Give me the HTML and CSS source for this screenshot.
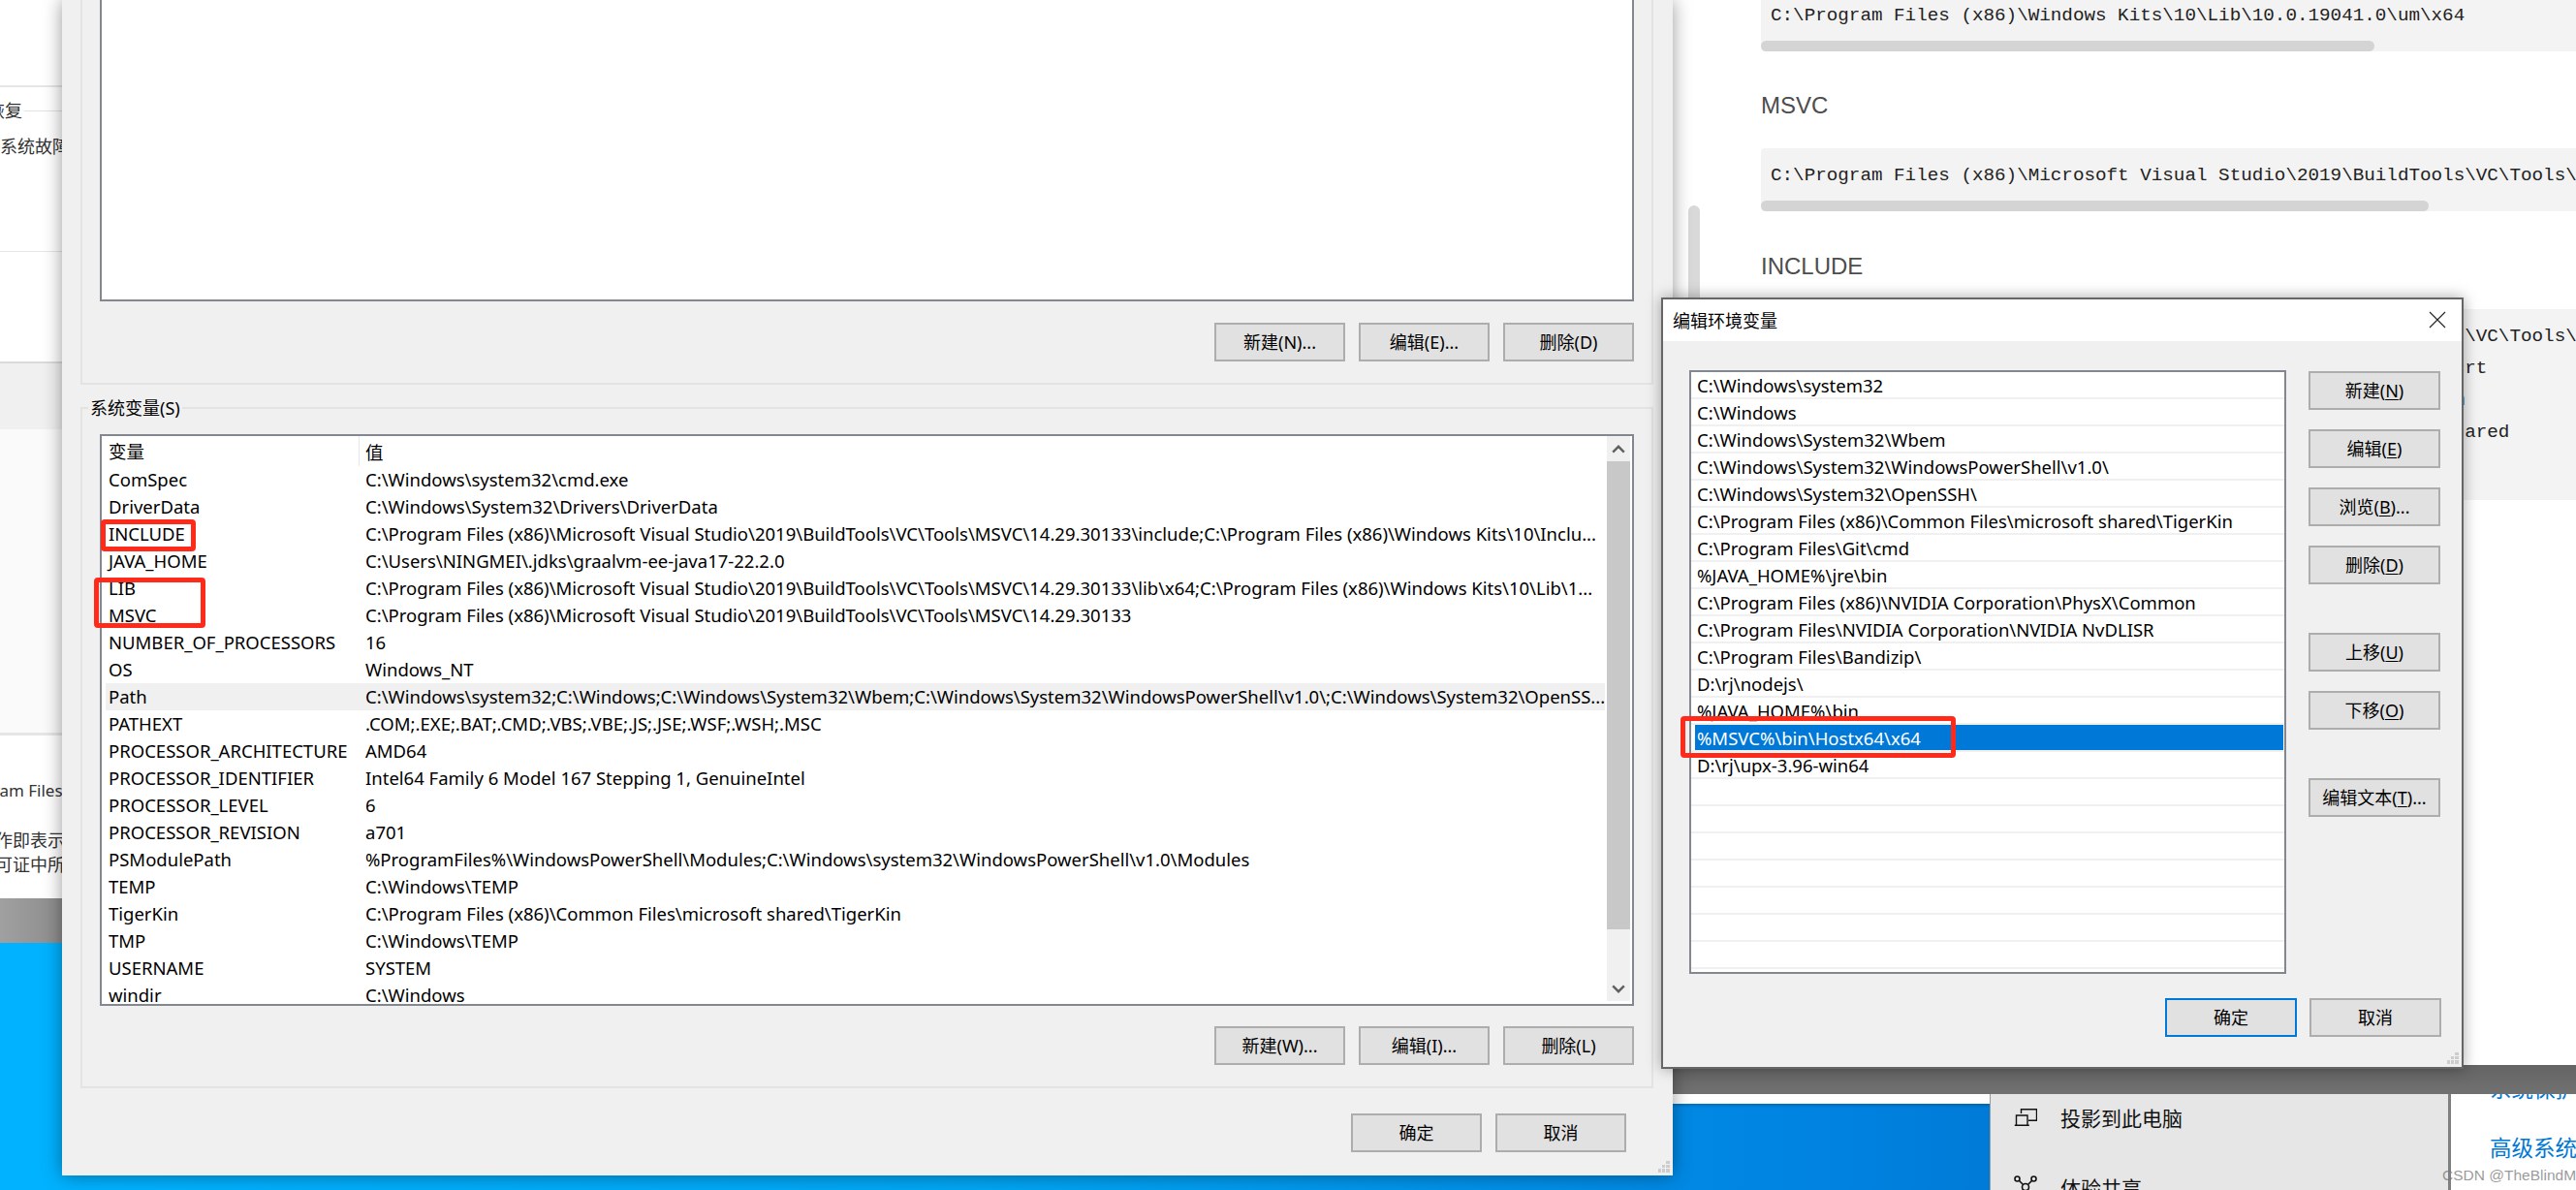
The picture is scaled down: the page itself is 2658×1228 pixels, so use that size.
FILE: index.html
```html
<!DOCTYPE html>
<html lang="zh-CN">
<head>
<meta charset="utf-8">
<title>编辑环境变量</title>
<link rel="stylesheet" href="styles.css">
</head>
<body>
<div class="screen">

  <section class="bg-left">
    <div class="bl-white">
      <div class="bl-sec bl-sec-a"></div>
      <div class="bl-legend"><span class="bl-txt bl-shift">和恢复</span><i class="bl-rule"></i></div>
      <div class="bl-txt bl-fault">系统故障</div>
    </div>
    <div class="bl-band"></div>
    <div class="bl-lower"></div>
    <div class="bl-legal">
      <div class="bl-txt bl-prog">Program Files</div>
      <div class="bl-txt bl-l1">作即表示你</div>
      <div class="bl-txt bl-l2">可证中所述</div>
    </div>
    <div class="bl-gray"></div>
  </section>

  <section class="right">
    <div class="article">
      <div class="gutter"><div class="gutter-thumb"></div></div>
      <div class="content">
        <div class="code code-first">
          <div class="code-text">C:\Program Files (x86)\Windows Kits\10\Lib\10.0.19041.0\um\x64</div>
          <div class="code-bar bar-a"></div>
        </div>
        <p class="para para-msvc">MSVC</p>
        <div class="code">
          <div class="code-text">C:\Program Files (x86)\Microsoft Visual Studio\2019\BuildTools\VC\Tools\MSVC\14.29.30133</div>
          <div class="code-bar bar-b"></div>
        </div>
        <p class="para para-inc">INCLUDE</p>
        <div class="code code-multi">
          <div class="code-text">C:\Program Files (x86)\Microsoft Visual Studio\2019\BuildTools\VC\Tools\MSVC\14.29.30133\include</div>
          <div class="code-text">C:\Program Files (x86)\Windows Kits\10\Include\10.0.19041.0\ucrt</div>
          <div class="code-text">C:\Program Files (x86)\Windows Kits\10\Include\10.0.19041.0\um</div>
          <div class="code-text">C:\Program Files (x86)\Windows Kits\10\Include\10.0.19041.0\shared</div>
        </div>
      </div>
    </div>
    <div class="band"></div>
    <div class="settings">
      <div class="desk"><div class="desk-strip"></div></div>
      <div class="panel">
        <div class="panel-list">
          <div class="panel-row">
            <svg class="panel-ico" viewBox="0 0 24 18" width="24" height="18"><path d="M7.5 5V.8h16v11.4H15M.8 17.2h15M2.5 17V7h11.5v10" fill="none" stroke="#111" stroke-width="1.4"/></svg>
            <span>投影到此电脑</span>
          </div>
          <div class="panel-row">
            <svg class="panel-ico" viewBox="0 0 24 24" width="24" height="24"><g fill="none" stroke="#111" stroke-width="1.6"><circle cx="3.5" cy="3.5" r="2.5"/><circle cx="20.5" cy="3.5" r="2.5"/><circle cx="12" cy="12" r="3.5"/><circle cx="3.5" cy="21" r="2.5"/><circle cx="20.5" cy="21" r="2.5"/><path d="M5.3 5.3l4 4M18.7 5.3l-4 4M5.3 19.3l4-4.5M18.7 19.3l-4-4.5"/></g></svg>
            <span>体验共享</span>
          </div>
        </div>
      </div>
      <div class="links">
        <a class="link link-clip">系统保护</a>
        <a class="link">高级系统设置</a>
      </div>
    </div>
  </section>

  <section class="dialog main-dlg">
    <div class="group-top">
      <div class="listbox-empty"></div>
      <div class="btn-row">
        <button class="btn">新建(N)...</button>
        <button class="btn">编辑(E)...</button>
        <button class="btn">删除(D)</button>
      </div>
    </div>
    <fieldset class="group-sys">
      <legend class="legend">系统变量(S)</legend>
      <div class="lv">
        <div class="lv-body">
          <div class="lv-head"><span class="col-n">变量</span><span class="col-v">值</span></div>
          <div class="lv-row"><span class="col-n">ComSpec</span><span class="col-v">C:\Windows\system32\cmd.exe</span></div>
          <div class="lv-row"><span class="col-n">DriverData</span><span class="col-v">C:\Windows\System32\Drivers\DriverData</span></div>
          <div class="lv-row"><span class="col-n">INCLUDE</span><span class="col-v">C:\Program Files (x86)\Microsoft Visual Studio\2019\BuildTools\VC\Tools\MSVC\14.29.30133\include;C:\Program Files (x86)\Windows Kits\10\Inclu...</span></div>
          <div class="lv-row"><span class="col-n">JAVA_HOME</span><span class="col-v">C:\Users\NINGMEI\.jdks\graalvm-ee-java17-22.2.0</span></div>
          <div class="lv-row"><span class="col-n">LIB</span><span class="col-v">C:\Program Files (x86)\Microsoft Visual Studio\2019\BuildTools\VC\Tools\MSVC\14.29.30133\lib\x64;C:\Program Files (x86)\Windows Kits\10\Lib\1...</span></div>
          <div class="lv-row"><span class="col-n">MSVC</span><span class="col-v">C:\Program Files (x86)\Microsoft Visual Studio\2019\BuildTools\VC\Tools\MSVC\14.29.30133</span></div>
          <div class="lv-row"><span class="col-n">NUMBER_OF_PROCESSORS</span><span class="col-v">16</span></div>
          <div class="lv-row"><span class="col-n">OS</span><span class="col-v">Windows_NT</span></div>
          <div class="lv-row lv-hot"><span class="col-n">Path</span><span class="col-v">C:\Windows\system32;C:\Windows;C:\Windows\System32\Wbem;C:\Windows\System32\WindowsPowerShell\v1.0\;C:\Windows\System32\OpenSS...</span></div>
          <div class="lv-row"><span class="col-n">PATHEXT</span><span class="col-v">.COM;.EXE;.BAT;.CMD;.VBS;.VBE;.JS;.JSE;.WSF;.WSH;.MSC</span></div>
          <div class="lv-row"><span class="col-n">PROCESSOR_ARCHITECTURE</span><span class="col-v">AMD64</span></div>
          <div class="lv-row"><span class="col-n">PROCESSOR_IDENTIFIER</span><span class="col-v">Intel64 Family 6 Model 167 Stepping 1, GenuineIntel</span></div>
          <div class="lv-row"><span class="col-n">PROCESSOR_LEVEL</span><span class="col-v">6</span></div>
          <div class="lv-row"><span class="col-n">PROCESSOR_REVISION</span><span class="col-v">a701</span></div>
          <div class="lv-row"><span class="col-n">PSModulePath</span><span class="col-v">%ProgramFiles%\WindowsPowerShell\Modules;C:\Windows\system32\WindowsPowerShell\v1.0\Modules</span></div>
          <div class="lv-row"><span class="col-n">TEMP</span><span class="col-v">C:\Windows\TEMP</span></div>
          <div class="lv-row"><span class="col-n">TigerKin</span><span class="col-v">C:\Program Files (x86)\Common Files\microsoft shared\TigerKin</span></div>
          <div class="lv-row"><span class="col-n">TMP</span><span class="col-v">C:\Windows\TEMP</span></div>
          <div class="lv-row"><span class="col-n">USERNAME</span><span class="col-v">SYSTEM</span></div>
          <div class="lv-row"><span class="col-n">windir</span><span class="col-v">C:\Windows</span></div>
        </div>
        <div class="sb">
          <div class="sb-btn sb-up"><svg viewBox="0 0 14 9" width="14" height="9"><path d="M1.2 7.6L7 1.8l5.8 5.8" fill="none" stroke="#606060" stroke-width="2.4"/></svg></div>
          <div class="sb-thumb"></div>
          <div class="sb-track"></div>
          <div class="sb-btn sb-down"><svg viewBox="0 0 14 9" width="14" height="9"><path d="M1.2 1.4L7 7.2l5.8-5.8" fill="none" stroke="#606060" stroke-width="2.4"/></svg></div>
        </div>
      </div>
      <div class="btn-row btn-row-sys">
        <button class="btn">新建(W)...</button>
        <button class="btn">编辑(I)...</button>
        <button class="btn">删除(L)</button>
      </div>
    </fieldset>
    <div class="dlg-foot">
      <button class="btn">确定</button>
      <button class="btn">取消</button>
    </div>
    <svg class="grip" viewBox="0 0 12 12" width="12" height="12"><path d="M8 0h4v3H8zM4 4h3v3H4zM8 4h4v3H8zM0 8h3v4H0zM4 8h3v4H4zM8 8h4v4H8z" fill="#cdcdcd"/></svg>
  </section>

  <section class="dialog edit-dlg">
    <header class="edit-title">
      <span>编辑环境变量</span>
      <svg class="close-x" viewBox="0 0 18 18" width="18" height="18"><path d="M1 1l16 16M17 1L1 17" fill="none" stroke="#222" stroke-width="1.1"/></svg>
    </header>
    <div class="edit-body">
      <div class="pathlist">
        <div class="p-row">C:\Windows\system32</div>
        <div class="p-row">C:\Windows</div>
        <div class="p-row">C:\Windows\System32\Wbem</div>
        <div class="p-row">C:\Windows\System32\WindowsPowerShell\v1.0\</div>
        <div class="p-row">C:\Windows\System32\OpenSSH\</div>
        <div class="p-row">C:\Program Files (x86)\Common Files\microsoft shared\TigerKin</div>
        <div class="p-row">C:\Program Files\Git\cmd</div>
        <div class="p-row">%JAVA_HOME%\jre\bin</div>
        <div class="p-row">C:\Program Files (x86)\NVIDIA Corporation\PhysX\Common</div>
        <div class="p-row">C:\Program Files\NVIDIA Corporation\NVIDIA NvDLISR</div>
        <div class="p-row">C:\Program Files\Bandizip\</div>
        <div class="p-row">D:\rj\nodejs\</div>
        <div class="p-row">%JAVA_HOME%\bin</div>
        <div class="p-row p-sel-wrap"><span class="p-sel">%MSVC%\bin\Hostx64\x64</span></div>
        <div class="p-row">D:\rj\upx-3.96-win64</div>
        <div class="p-row"></div>
        <div class="p-row"></div>
        <div class="p-row"></div>
        <div class="p-row"></div>
        <div class="p-row"></div>
        <div class="p-row"></div>
        <div class="p-row"></div>
      </div>
      <div class="edit-btns">
        <button class="btn btn-w">新建(<u>N</u>)</button>
        <button class="btn btn-w">编辑(<u>E</u>)</button>
        <button class="btn btn-w">浏览(<u>B</u>)...</button>
        <button class="btn btn-w">删除(<u>D</u>)</button>
        <button class="btn btn-w btn-gap">上移(<u>U</u>)</button>
        <button class="btn btn-w">下移(<u>O</u>)</button>
        <button class="btn btn-w btn-gap">编辑文本(<u>T</u>)...</button>
      </div>
    </div>
    <div class="edit-foot">
      <button class="btn btn-w btn-focus">确定</button>
      <button class="btn btn-w">取消</button>
    </div>
    <svg class="grip" viewBox="0 0 12 12" width="12" height="12"><path d="M8 0h4v3H8zM4 4h3v3H4zM8 4h4v3H8zM0 8h3v4H0zM4 8h3v4H4zM8 8h4v4H8z" fill="#cdcdcd"/></svg>
  </section>

  <div class="mark mark-include"></div>
  <div class="mark mark-lib"></div>
  <div class="mark mark-path"></div>
  <div class="watermark">CSDN @TheBlindM</div>
</div>
</body>
</html>
```

FILE: styles.css
```css
* { box-sizing: border-box; }
html, body { margin: 0; padding: 0; }
body {
  width: 2658px;
  height: 1228px;
  overflow: hidden;
  font-family: "Noto Sans", "Noto Sans CJK SC", sans-serif;
  font-size: 18.5px;
  color: #000;
}
.screen {
  position: relative;
  width: 2658px;
  height: 1228px;
  overflow: hidden;
  background: linear-gradient(90deg, #00b2ff 0, #00a6f4 1000px, #0082e0 1900px, #0078d4 2100px);
}

/* window far left */
.bg-left {
  position: absolute;
  left: 0;
  top: 0;
  width: 64px;
  height: 973px;
  display: flex;
  flex-direction: column;
  overflow: hidden;
  background: #fff;
}
.bl-white { height: 375px; background: #fff; border-bottom: 2px solid #dcdcdc; }
.bl-sec-a { height: 90px; border-bottom: 2px solid #e6e6e6; }
.bl-legend { height: 48px; display: flex; align-items: center; }
.bl-rule { flex: 1; height: 1px; background: #e2e2e2; }
.bl-txt { white-space: nowrap; font-size: 18px; color: #333; line-height: 26px; }
.bl-shift { margin-left: -31px; margin-right: 2px; flex: none; }
.bl-fault { padding-bottom: 95px; border-bottom: 1px solid #e6e6e6; }
.bl-band { height: 68px; background: #f0f0f0; box-shadow: 0 2px 3px rgba(0,0,0,.25); }
.bl-lower { height: 316px; background: #fafafa; border-bottom: 3px solid #e6e6e6; }
.bl-legal { height: 168px; background: #fff; padding-top: 44px; }
.bl-prog { margin-left: -45px; font-size: 17px; }
.bl-l1 { margin-left: -5px; margin-top: 25px; }
.bl-l2 { margin-left: -5px; margin-top: -1px; }
.bl-gray { height: 46px; background: linear-gradient(90deg, #a0a0a0, #8c8c8c); }

/* browser + settings behind */
.right {
  position: absolute;
  left: 1726px;
  top: 0;
  width: 932px;
  height: 1228px;
  display: flex;
  flex-direction: column;
}
.article { height: 1099px; flex: none; background: #fff; display: flex; overflow: hidden; }
.gutter { width: 28px; flex: none; padding: 212px 0 0 16px; }
.gutter-thumb { width: 12px; height: 400px; border-radius: 6px; background: #d9d9d9; }
.content { flex: 1; padding-left: 63px; min-width: 0; }
.code {
  height: 65px;
  margin-right: -40px;
  border-radius: 4px;
  background: #f3f3f3;
  padding-top: 12px;
  position: relative;
  overflow: hidden;
}
.code-first { margin-top: -12px; }
.code-multi { height: 197px; padding-top: 12px; border-radius: 4px; }
.code-text {
  padding-left: 10px;
  font-family: "Liberation Mono", monospace;
  font-size: 19.25px;
  line-height: 33px;
  height: 33px;
  white-space: pre;
  color: #222;
}
.code-bar { position: absolute; left: 0; bottom: 0; height: 11px; border-radius: 6px; background: #d4d4d4; }
.bar-a { width: 633px; }
.bar-b { width: 689px; }
.para {
  margin: 0;
  font-family: "Liberation Sans", sans-serif;
  font-size: 24px;
  line-height: 34px;
  color: #4d4d4d;
}
.para-msvc { padding: 39px 0 27px; }
.para-inc { padding: 40px 0 27px; }

.band { height: 30px; flex: none; background: linear-gradient(#646464, #717171); }
.settings { flex: 1; display: flex; overflow: hidden; }
.desk { width: 327px; flex: none; }
.desk-strip { height: 10px; background: #fff; box-shadow: 0 2px 3px rgba(0,0,0,.18); }
.panel {
  width: 476px;
  flex: none;
  background: #e6e6e6;
  border-left: 1px solid #9a9a9a;
  border-right: 3px solid #7f7f7f;
  overflow: hidden;
}
.panel-list { margin-top: -12px; }
.panel-row { height: 72px; display: flex; align-items: center; padding-left: 24px; font-size: 21px; font-family: "Noto Sans CJK SC", sans-serif; color: #111; }
.panel-ico { flex: none; margin-right: 24px; }
.links { flex: 1; min-width: 0; background: #fff; padding-left: 40px; overflow: hidden; display: flex; flex-direction: column; gap: 31px; }
.link { font-family: "Noto Sans CJK SC", sans-serif; font-size: 22.5px; line-height: 30px; color: #0078d7; white-space: nowrap; }
.link-clip { margin-top: -22px; }

/* dialogs */
.dialog { position: absolute; background: #f0f0f0; }
.main-dlg {
  left: 64px;
  top: 0;
  width: 1662px;
  height: 1213px;
  padding: 0 20px 0 19px;
  box-shadow: 0 0 18px rgba(0,0,0,.4);
}
.group-top {
  height: 397px;
  border: 2px solid #e3e3e3;
  border-top: 0;
  padding: 0 18px 0 18px;
}
.listbox-empty { height: 311px; background: #fff; border: 2px solid #828790; border-top: 0; }
.btn-row { display: flex; justify-content: flex-end; gap: 14px; padding-top: 22px; }
.btn {
  width: 135px;
  height: 40px;
  padding: 0;
  background: #e1e1e1;
  border: 2px solid #adadad;
  font-family: "Noto Sans", "Noto Sans CJK SC", sans-serif;
  font-size: 18px;
  line-height: 34px;
  color: #000;
  white-space: nowrap;
}
.group-sys {
  margin: 12px 0 0;
  padding: 15px 18px 0;
  height: 714px;
  min-width: 0;
  border: 2px solid #e3e3e3;
}
.legend { margin-left: -12px; padding: 0 2px; line-height: 24px; font-size: 18px; }
.lv { height: 590px; display: flex; background: #fff; border: 2px solid #828790; overflow: hidden; }
.lv-body { flex: 1; min-width: 0; padding-left: 4px; padding-right: 2px; overflow: hidden; }
.lv-head { height: 31px; display: flex; align-items: center; }
.lv-head .col-n { border-right: 1px solid #e8e8e8; height: 31px; line-height: 31px; }
.lv-row { height: 28px; line-height: 28px; display: flex; white-space: nowrap; }
.lv-hot { background: #f0f0f0; }
.col-n { width: 262px; flex: none; padding-left: 3px; overflow: hidden; }
.col-v { flex: 1; min-width: 0; padding-left: 6px; overflow: hidden; }
.sb { width: 24px; flex: none; margin: 0 2px 3px 0; display: flex; flex-direction: column; background: #f0f0f0; }
.sb-btn { height: 26px; flex: none; display: flex; align-items: center; justify-content: center; }
.sb-thumb { height: 483px; flex: none; background: #c8c8c8; }
.sb-track { flex: 1; }
.btn-row-sys { padding-top: 21px; }
.dlg-foot { display: flex; justify-content: flex-end; gap: 14px; padding: 26px 28px 0 0; }
.grip { position: absolute; right: 3px; bottom: 3px; }

.edit-dlg {
  left: 1714px;
  top: 307px;
  width: 828px;
  height: 796px;
  border: 2px solid #666;
  box-shadow: 0 0 14px rgba(0,0,0,.35);
}
.edit-title {
  height: 43px;
  background: #fff;
  padding: 0 16px 2px 10px;
  display: flex;
  align-items: center;
  justify-content: space-between;
  font-size: 18px;
}
.edit-body { display: flex; gap: 23px; padding: 30px 0 0 27px; height: 653px; }
.pathlist {
  width: 616px;
  height: 623px;
  background: #fff;
  border: 2px solid #828790;
  overflow: hidden;
}
.p-row {
  height: 28px;
  line-height: 27px;
  padding-left: 6px;
  border-bottom: 2px solid #f0f0f0;
  white-space: nowrap;
  display: flex;
}
.p-sel-wrap { padding-left: 4px; }
.p-sel { flex: 1; background: #0078d7; color: #fff; padding-left: 2px; margin-right: 1px; }
.edit-btns { display: flex; flex-direction: column; gap: 20px; padding-top: 1px; }
.btn-w { width: 136px; }
.btn-gap { margin-top: 30px; }
.edit-btns u { text-underline-offset: 2px; }
.edit-foot { display: flex; justify-content: flex-end; gap: 13px; padding: 25px 21px 0 0; }
.btn-focus { border-color: #0078d7; }

/* annotations */
.mark { position: absolute; border: 5px solid #ff2a1a; border-radius: 4px; }
.mark-include { left: 104px; top: 536px; width: 98px; height: 33px; }
.mark-lib { left: 97px; top: 596px; width: 115px; height: 52px; }
.mark-path { left: 1734px; top: 739px; width: 284px; height: 43px; }
.watermark {
  position: absolute;
  left: 2520px;
  top: 1203px;
  font-family: "Liberation Sans", sans-serif;
  font-size: 15.5px;
  line-height: 20px;
  color: rgba(120,120,120,.75);
  white-space: nowrap;
}
```
